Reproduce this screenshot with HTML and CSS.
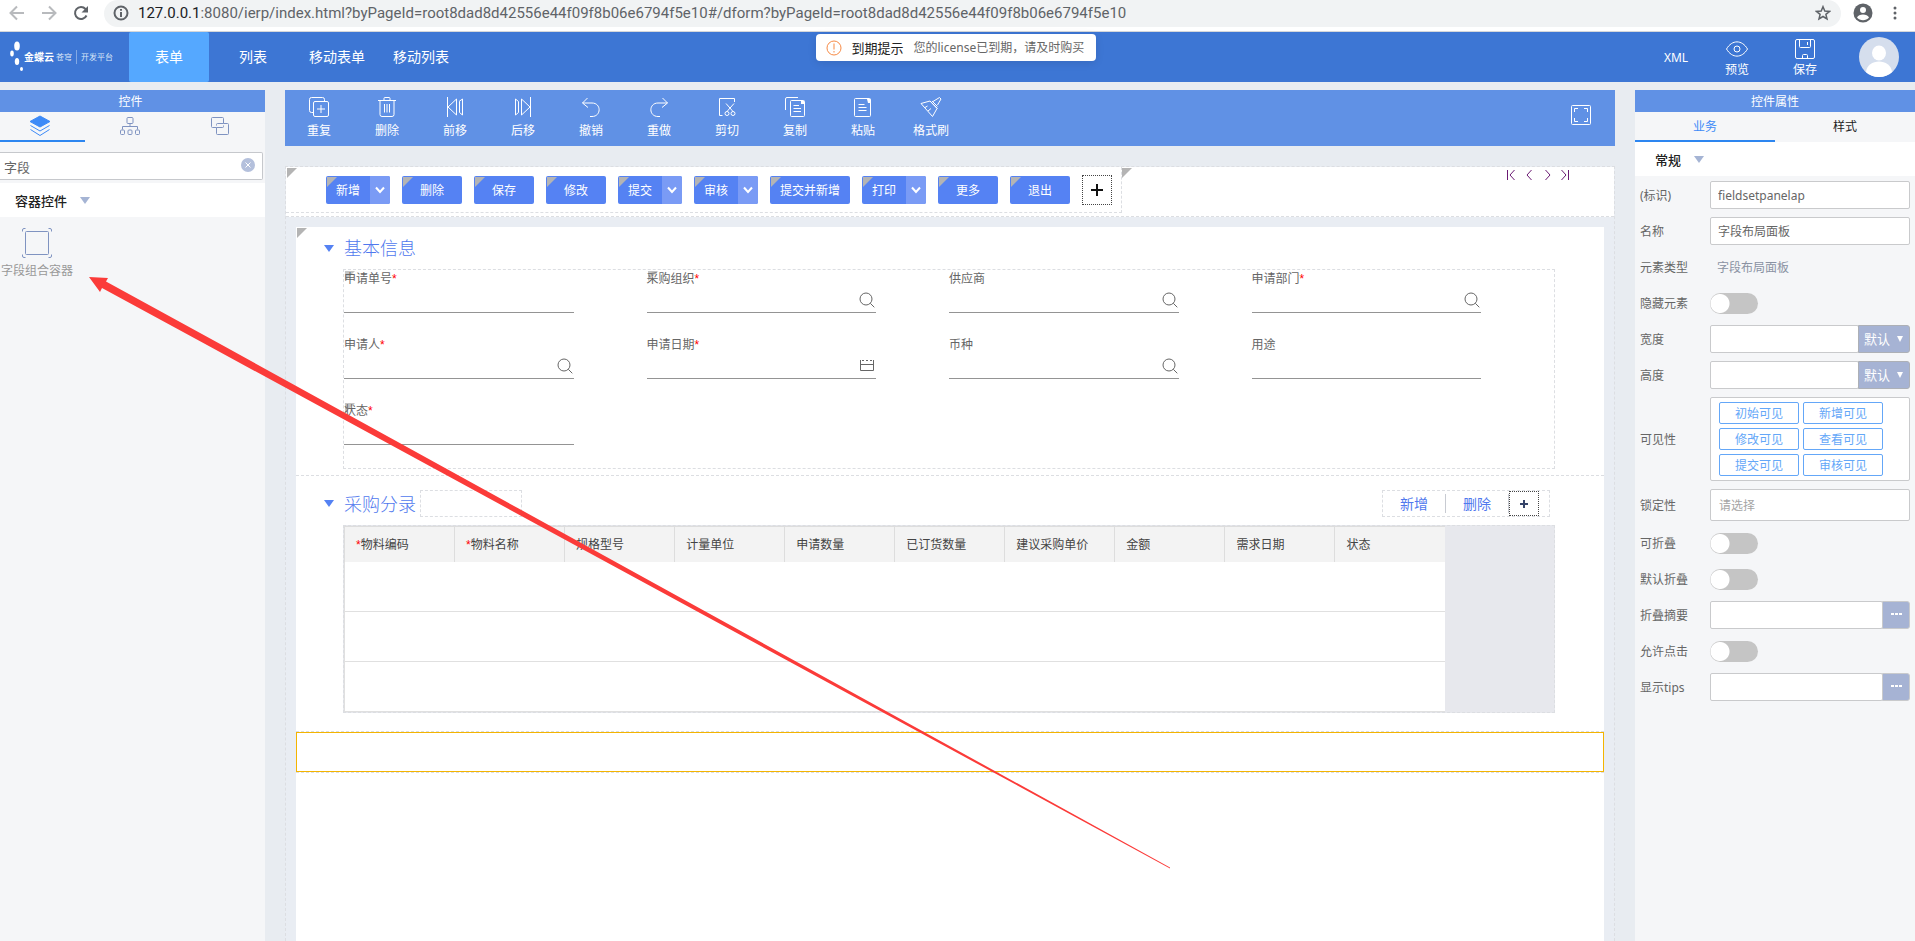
FILE: index.html
```html
<!DOCTYPE html>
<html lang="zh-CN">
<head>
<meta charset="utf-8">
<title>金蝶云苍穹 开发平台</title>
<link rel="stylesheet" href="styles.css">
</head>
<body>
<svg width="0" height="0" class="defs" aria-hidden="true">
  <symbol id="search" viewBox="0 0 16 16"><circle cx="7" cy="7" r="6"/><path d="M11.3 11.3L15.3 15.3"/></symbol>
  <symbol id="chev" viewBox="0 0 10 8"><path d="M1 1.5L5 6L9 1.5"/></symbol>
</svg>

<div class="browser">
  <button class="nav off" aria-label="后退"><svg width="16" height="16" viewBox="0 0 16 16"><path d="M15 8H2M8 1.500L1.500 8L8 14.500"/></svg></button>
  <button class="nav off" aria-label="前进"><svg width="16" height="16" viewBox="0 0 16 16"><path d="M1 8H14M8 1.500L14.500 8L8 14.500"/></svg></button>
  <button class="nav" aria-label="刷新"><svg width="16" height="16" viewBox="0 0 16 16"><path d="M13.500 10.500A6 6 0 1 1 12.500 4L14 5.500"/><path class="solid" d="M15 1V7.500H8.500Z"/></svg></button>
  <div class="address">
    <svg width="16" height="16" viewBox="0 0 16 16"><circle cx="8" cy="8" r="6.500"/><path d="M8 7V12M8 4V5.800"/></svg>
    <span class="url"><b>127.0.0.1</b>:8080/ierp/index.html?byPageId=root8dad8d42556e44f09f8b06e6794f5e10#/dform?byPageId=root8dad8d42556e44f09f8b06e6794f5e10</span>
    <svg width="16" height="16" viewBox="0 0 16 16"><path class="star" d="M8 1.700L9.800 6.100L14.500 6.400L10.900 9.400L12 14L8 11.500L4 14L5.100 9.400L1.500 6.400L6.200 6.100Z"/></svg>
  </div>
  <button class="nav user" aria-label="用户"><svg width="20" height="20" viewBox="0 0 20 20"><circle class="fill" cx="10" cy="10" r="9.500"/><circle class="hole" cx="10" cy="7" r="3"/><path class="hole" d="M4 14.500C5.500 10.500 14.500 10.500 16 14.500C13 18 7 18 4 14.500Z"/></svg></button>
  <button class="nav dots" aria-label="菜单"><svg width="6" height="16" viewBox="0 0 6 16"><g class="fill"><circle cx="3" cy="3" r="1.500"/><circle cx="3" cy="8" r="1.500"/><circle cx="3" cy="13" r="1.500"/></g></svg></button>
</div>

<header class="top">
  <div class="logo">
    <svg width="14" height="32" viewBox="0 0 14 32"><ellipse cx="7" cy="5" rx="2.800" ry="4.500"/><ellipse cx="2" cy="12.500" rx="1.800" ry="3"/><ellipse cx="7" cy="20.500" rx="2.200" ry="3.500"/><ellipse cx="11.500" cy="28" rx="1.500" ry="2"/></svg>
    <b>金蝶云</b><span>苍穹</span><i></i><span>开发平台</span>
  </div>
  <nav class="tabs">
    <a href="#form" class="on">表单</a><a href="#list">列表</a><a href="#mform">移动表单</a><a href="#mlist">移动列表</a>
  </nav>
  <div class="notice" role="alert">
    <svg width="16" height="16" viewBox="0 0 16 16"><circle cx="8" cy="8" r="7"/><path d="M8 3.500V9.500M8 11V12.500"/></svg>
    <strong>到期提示</strong><span>您的license已到期，请及时购买</span>
  </div>
  <div class="acts">
    <button class="xml">XML</button>
    <button><svg width="24" height="24" viewBox="0 0 24 24"><path d="M1.500 12C7 2.500 17 2.500 22.500 12C17 21.500 7 21.500 1.500 12Z"/><circle cx="12" cy="12" r="3"/></svg>预览</button>
    <button><svg width="24" height="24" viewBox="0 0 24 24"><rect x="2.500" y="2.500" width="19" height="19" rx="1.500"/><path d="M6.500 2.500V9.500Q6.500 10.500 7.500 10.500H16.500Q17.500 10.500 17.500 9.500V2.500M14.500 5V8M9.500 21.500V18.500Q9.500 17.500 10.500 17.500H13.500Q14.500 17.500 14.500 18.500V21.500"/></svg>保存</button>
    <svg class="avatar" width="40" height="40" viewBox="0 0 40 40"><circle cx="20" cy="20" r="20"/><g><ellipse cx="20" cy="16" rx="7" ry="7.500"/><path d="M7 35.200C8 21 32 21 33 35.200A20 20 0 0 1 7 35.200Z"/></g></svg>
  </div>
</header>

<main class="work">
  <aside class="panel left">
    <h2>控件</h2>
    <div class="ptabs three">
      <button class="on" aria-label="控件"><svg width="22" height="22" viewBox="0 0 22 22"><path class="full" d="M11 1L21 6.500L11 12L1 6.500Z"/><path d="M1.500 10.500L11 16L20.500 10.500M1.500 14.500L11 20.500L20.500 14.500"/></svg></button>
      <button aria-label="结构"><svg width="22" height="22" viewBox="0 0 22 22"><rect x="8" y="2.500" width="6" height="6" rx="1"/><path d="M11 8.500V11.500M3.500 14.500V11.500H18.500V14.500"/><rect x="1.500" y="15" width="4" height="4.500" rx="1"/><rect x="9" y="15" width="4" height="4.500" rx="1"/><rect x="16.500" y="15" width="4" height="4.500" rx="1"/></svg></button>
      <button aria-label="复制"><svg width="22" height="22" viewBox="0 0 22 22"><path d="M7.500 12.500H3.500Q2.500 12.500 2.500 11.500V3.500Q2.500 2.500 3.500 2.500H13.500Q14.500 2.500 14.500 3.500V8.500H8.500Q7.500 8.500 7.500 9.500V10.500M14.500 8.500H18.500Q19.500 8.500 19.500 9.500V18.500Q19.500 19.500 18.500 19.500H8.500Q7.500 19.500 7.500 18.500V12.500H13.500Q14.500 12.500 14.500 11.500V10.500"/></svg></button>
    </div>
    <div class="find">
      <input type="text" value="字段" aria-label="搜索控件">
      <button aria-label="清除"><svg width="14" height="14" viewBox="0 0 14 14"><circle cx="7" cy="7" r="7"/><path d="M4.500 4.500L9.500 9.500M9.500 4.500L4.500 9.500"/></svg></button>
    </div>
    <h3>容器控件<i class="tri"></i></h3>
    <a class="widget" href="#fieldgroup"><svg width="32" height="32" viewBox="0 0 32 32"><rect x="4.500" y="4.500" width="23" height="23" rx="1"/><path d="M1.500 4.500V3Q1.500 1.500 3 1.500H4.500M27.500 1.500H29Q30.500 1.500 30.500 3V4.500M30.500 27.500V29Q30.500 30.500 29 30.500H27.500M4.500 30.500H3Q1.500 30.500 1.500 29V27.500"/></svg><span>字段组合容器</span></a>
  </aside>

  <section class="center">
    <div class="tools">
      <button><svg viewBox="0 0 22 22"><path d="M5.500 16.500H3.500Q1.500 16.500 1.500 14.500V3.500Q1.500 1.500 3.500 1.500H14.500Q16.500 1.500 16.500 3.500V5"/><rect x="5.500" y="5.500" width="15" height="15" rx="1.500"/><path d="M13 9V17M9 13H17"/></svg>重复</button>
      <button><svg viewBox="0 0 22 22"><path d="M2 4.500H20M8 4V2.500Q8 1.500 9 1.500H13Q14 1.500 14 2.500V4M4 4.500V18.500Q4 20.500 6 20.500H16Q18 20.500 18 18.500V4.500M8.500 8V16.500M11 8V16.500M13.500 8V16.500"/></svg>删除</button>
      <button><svg viewBox="0 0 22 22"><path d="M3.500 1V21M12.500 3L4 11L12.500 19ZM15 5.500L18.500 3V19L15.500 16.500M15.500 5.500V16.500"/></svg>前移</button>
      <button><svg viewBox="0 0 22 22"><path d="M18.500 1V21M9.500 3L18 11L9.500 19ZM6.500 16.500L3.500 19V3L6.500 5.500V16.500"/></svg>后移</button>
      <button><svg viewBox="0 0 22 22"><path d="M7.500 2L2.500 7L8 11.500M2.500 7H12C21.500 7 21.500 20.500 12 20.500H10"/></svg>撤销</button>
      <button><svg viewBox="0 0 22 22"><path d="M14.500 2L19.500 7L14 11.500M19.500 7H10C0.500 7 0.500 20.500 10 20.500H12"/></svg>重做</button>
      <button><svg viewBox="0 0 22 22"><path d="M6.500 19.500H3.500V2.500H18.500V6M10 7.500L17 15.500M18 7.500L11 15.500"/><circle cx="11" cy="17.500" r="2"/><circle cx="17" cy="17.500" r="2"/></svg>剪切</button>
      <button><svg viewBox="0 0 22 22"><path d="M1.500 14V3Q1.500 1.500 3 1.500H14"/><rect x="6.500" y="4.500" width="14" height="16" rx="1"/><path d="M9.500 9.500H15M9.500 12.500H17M9.500 15.500H17"/><path class="white" d="M17 5H20V8H17Z"/></svg>复制</button>
      <button><svg viewBox="0 0 22 22"><rect x="2.500" y="2.500" width="16" height="18" rx="1"/><path d="M6.500 8.500H12.500M6.500 11.500H14.500M6.500 14.500H14.500"/><path class="white" d="M15 3H18.500V7H16Z"/></svg>粘贴</button>
      <button><svg viewBox="0 0 22 22"><path d="M10 5L1 7.500L12.500 20.500L17 12.500ZM10 5L17.500 12.500M12 5L17.500 10.500M13 5.500L19.500 1.500L21 3L17.500 9M5 11.500L7.500 10M8 15L11 12.500"/></svg>格式刷</button>
      <button class="full-btn" aria-label="全屏"><svg viewBox="0 0 22 22"><rect x="1.500" y="1.500" width="19" height="19" rx="1"/><path d="M4.500 8V4.500H8M14 4.500H17.500V8M17.500 14V17.500H14M8 17.500H4.500V14"/></svg></button>
    </div>

    <div class="canvas">
      <div class="bar">
        <div class="btns mark">
          <span class="split mark"><button>新增</button><button aria-label="更多"><svg><use href="#chev"/></svg></button></span>
          <button class="btn mark">删除</button>
          <button class="btn mark">保存</button>
          <button class="btn mark">修改</button>
          <span class="split mark"><button>提交</button><button aria-label="更多"><svg><use href="#chev"/></svg></button></span>
          <span class="split mark"><button>审核</button><button aria-label="更多"><svg><use href="#chev"/></svg></button></span>
          <button class="btn mark">提交并新增</button>
          <span class="split mark"><button>打印</button><button aria-label="更多"><svg><use href="#chev"/></svg></button></span>
          <button class="btn mark">更多</button>
          <button class="btn mark">退出</button>
          <button class="plus" aria-label="添加"><svg width="14" height="14" viewBox="0 0 14 14"><path d="M7 1V13M1 7H13"/></svg></button>
        </div>
        <div class="pager mark">
          <button aria-label="首条"><svg viewBox="0 0 10 12"><path d="M1.500 1V11M8.500 1L4 6L8.500 11"/></svg></button>
          <button aria-label="上一条"><svg viewBox="0 0 10 12"><path d="M7.500 1L3 6L7.500 11"/></svg></button>
          <button aria-label="下一条"><svg viewBox="0 0 10 12"><path d="M3.500 1L8 6L3.500 11"/></svg></button>
          <button aria-label="末条"><svg viewBox="0 0 10 12"><path d="M1.500 1L6 6L1.500 11M8.500 1V11"/></svg></button>
        </div>
      </div>

      <div class="sheet">
        <section class="block mark">
          <div class="head"><i class="tri"></i><h1>基本信息</h1></div>
          <div class="fields">
            <label class="mark"><span>申请单号<em>*</em></span><input type="text"></label>
            <label class="mark"><span>采购组织<em>*</em></span><input type="text"><svg><use href="#search"/></svg></label>
            <label><span>供应商</span><input type="text"><svg><use href="#search"/></svg></label>
            <label><span>申请部门<em>*</em></span><input type="text"><svg><use href="#search"/></svg></label>
            <label><span>申请人<em>*</em></span><input type="text"><svg><use href="#search"/></svg></label>
            <label><span>申请日期<em>*</em></span><input type="text"><svg viewBox="0 0 16 16"><path d="M1.500 2V12.500H14.500V2M1.500 6.500H14.500M3 2.500H5M7 2.500H9M11 2.500H13"/></svg></label>
            <label><span>币种</span><input type="text"><svg><use href="#search"/></svg></label>
            <label><span>用途</span><input type="text"></label>
            <label class="mark"><span>状态<em>*</em></span><input type="text"></label>
          </div>
        </section>

        <section class="block entry">
          <div class="head">
            <i class="tri"></i><h1>采购分录</h1><div class="slot"></div>
            <div class="links"><button>新增</button><button>删除</button><button class="plus" aria-label="添加"><svg width="10" height="10" viewBox="0 0 10 10"><path d="M5 1V9M1 5H9"/></svg></button></div>
          </div>
          <div class="gridbox">
            <table>
              <thead><tr><th><em>*</em>物料编码</th><th><em>*</em>物料名称</th><th>规格型号</th><th>计量单位</th><th>申请数量</th><th>已订货数量</th><th>建议采购单价</th><th>金额</th><th>需求日期</th><th>状态</th></tr></thead>
              <tbody><tr><td colspan="10"></td></tr><tr><td colspan="10"></td></tr><tr><td colspan="10"></td></tr></tbody>
            </table>
          </div>
        </section>
        <div class="picked"><div></div></div>
      </div>
    </div>
  </section>

  <aside class="panel right">
    <h2>控件属性</h2>
    <div class="ptabs"><button class="on">业务</button><button>样式</button></div>
    <h3>常规<i class="tri"></i></h3>
    <div class="props">
      <div class="row"><label for="pid">(标识)</label><input id="pid" type="text" value="fieldsetpanelap"></div>
      <div class="row"><label for="pname">名称</label><input id="pname" type="text" value="字段布局面板"></div>
      <div class="row"><span class="lab">元素类型</span><span class="value">字段布局面板</span></div>
      <div class="row"><label for="phide">隐藏元素</label><input id="phide" type="checkbox"></div>
      <div class="row"><label for="pw">宽度</label><input id="pw" type="text"><span class="unit"><select aria-label="宽度单位"><option>默认</option></select></span></div>
      <div class="row"><label for="ph">高度</label><input id="ph" type="text"><span class="unit"><select aria-label="高度单位"><option>默认</option></select></span></div>
      <div class="row"><span class="lab">可见性</span><div class="chips"><button>初始可见</button><button>新增可见</button><button>修改可见</button><button>查看可见</button><button>提交可见</button><button>审核可见</button></div></div>
      <div class="row"><label for="plock">锁定性</label><input id="plock" class="tall" type="text" placeholder="请选择"></div>
      <div class="row"><label for="pfold">可折叠</label><input id="pfold" type="checkbox"></div>
      <div class="row"><label for="pdef">默认折叠</label><input id="pdef" type="checkbox"></div>
      <div class="row"><label for="psum">折叠摘要</label><input id="psum" type="text"><button class="more" aria-label="更多"><i></i><i></i><i></i></button></div>
      <div class="row"><label for="pclick">允许点击</label><input id="pclick" type="checkbox"></div>
      <div class="row"><label for="ptips">显示tips</label><input id="ptips" type="text"><button class="more" aria-label="更多"><i></i><i></i><i></i></button></div>
    </div>
  </aside>
</main>

<svg class="arrow" width="1180" height="880" viewBox="0 0 1180 880" aria-hidden="true"><path d="M89 277L108 278L106 281.500L222 345L1170 867.500V868.500L207 345L102 288L100 292Z"/></svg>
</body>
</html>
```

FILE: styles.css
```css
* { box-sizing: border-box; }
body {
  margin: 0;
  min-height: 100vh;
  display: flex;
  flex-direction: column;
  position: relative;
  overflow-x: hidden;
  background: #e8ecf1;
  color: #666;
  font: 12px/18px "Noto Sans", "Noto Sans CJK SC", sans-serif;
}
button, input, select { font: inherit; color: inherit; margin: 0; padding: 0; border: 0; background: none; border-radius: 0; outline: 0; }
button { display: flex; align-items: center; justify-content: center; white-space: nowrap; }
svg { fill: none; stroke: currentColor; flex: none; display: block; }
em { font-style: normal; font-family: "Liberation Sans", sans-serif; color: #f00; }
h1, h2, h3 { margin: 0; font-weight: 400; }
a { color: inherit; text-decoration: none; }
.defs { position: absolute; }

/* browser bar */
.browser { height: 32px; flex: none; display: flex; align-items: flex-start; background: #fff; border-bottom: 1px solid #d5d7da; color: #5f6368; padding: 0 10px 0 8px; }
.nav { width: 32px; height: 26px; padding-right: 14px; }
.nav svg { stroke-width: 2; }
.off { color: #b8babd; }
.nav .solid, .nav .fill { fill: currentColor; stroke: none; }
.nav .hole { fill: #fff; stroke: none; }
.nav.user { width: 44px; padding: 0; }
.nav.dots { width: 20px; padding: 0; }
.address { flex: 1; height: 27px; display: flex; align-items: center; gap: 9px; background: #f1f3f4; border-radius: 14px; padding: 0 10px 1px 9px; min-width: 0; }
.address svg { stroke-width: 2; }
.address .star { stroke-width: 1.5; }
.url { flex: 1; font: 15px/24px Roboto, "Noto Sans", sans-serif; overflow: hidden; white-space: nowrap; }
.url b { font-weight: 400; color: #202124; }

/* header */
.top { height: 50px; flex: none; display: flex; background: #3d76d4; color: #fff; position: relative; }
.logo { width: 129px; display: flex; align-items: center; padding-left: 10px; font-size: 8px; color: #dce7f8; white-space: nowrap; }
.logo svg { fill: #fff; stroke: none; }
.logo b { font-size: 10px; color: #fff; margin-right: 2px; }
.logo i { width: 1px; height: 14px; background: #84a9e4; margin: 0 4px; }
.tabs { display: flex; font-size: 14px; }
.tabs a { width: 88px; line-height: 50px; text-align: center; white-space: nowrap; }
.tabs a:nth-child(odd) { width: 80px; }
.tabs a.on { background: #55a8ff; border-radius: 2px; }
.notice { position: absolute; top: 2px; left: 50%; width: 280px; margin-left: -142px; height: 27px; display: flex; align-items: center; padding-left: 10px; background: #fff; border-radius: 4px; box-shadow: 0 2px 8px rgba(0,0,0,.1); color: #666; white-space: nowrap; }
.notice svg { color: #f78a45; }
.notice strong { font-weight: 400; font-size: 13px; color: #222; margin: 0 10px; }
.acts { margin-left: auto; display: flex; align-items: center; padding-right: 16px; }
.acts button { width: 68px; height: 50px; padding-top: 2px; flex-direction: column; }
.acts .xml { width: 54px; }
.avatar { fill: #d5deed; stroke: none; margin-left: 20px; }
.avatar g { fill: #fff; }

/* panels */
.work { flex: 1; display: grid; grid-template-columns: 265px minmax(0, 1fr) 280px; gap: 20px; padding-top: 8px; }
.panel { background: #f5f6f8; }
.panel h2 { height: 22px; background: #6091e5; color: #fff; font-size: 12px; line-height: 24px; text-align: center; }
.left h2 { padding-right: 4px; }
.ptabs { display: flex; height: 30px; color: #222; }
.ptabs button { flex: 1; padding-top: 2px; border-bottom: 2px solid transparent; }
.ptabs .on { border-color: #2d86f0; color: #3d8af7; }
.ptabs.three button { color: #7f93c1; flex: none; width: 90px; padding: 0; }
.ptabs.three .on { width: 85px; padding-right: 5px; color: #3d8af7; }
.full { fill: currentColor; }
.panel h3 { display: flex; align-items: center; background: #fff; height: 34px; padding: 1px 0 0 15px; font-size: 13px; font-weight: 500; color: #222; }
.tri { width: 0; height: 0; border: 5px solid transparent; border-top: 7px solid #a5b4d4; border-bottom: 0; }
.panel h3 .tri { margin-left: 13px; }
.find { position: relative; margin: 10px 2px 3px 0; }
.find input { width: 100%; height: 28px; display: block; background: #fff; border: 1px solid #c6c8cc; border-left: 0; border-radius: 0 2px 2px 0; padding-left: 4px; font-size: 13px; }
.find button { position: absolute; right: 8px; top: 6px; }
.find svg { fill: #b4c0dc; stroke: none; }
.find path { stroke: #fff; }
.widget { width: 74px; display: flex; flex-direction: column; align-items: center; padding-top: 10px; color: #999; white-space: nowrap; }
.widget svg { color: #7f93c1; }
.widget span { margin-top: 3px; }
.right h3 { padding-left: 20px; margin-bottom: 1px; }

/* toolbar */
.center { display: flex; flex-direction: column; }
.tools { height: 56px; display: flex; background: #6091e5; color: #fff; }
.tools button { width: 68px; flex-direction: column; gap: 4px; }
.tools svg { width: 22px; height: 22px; }
.tools .white { fill: #fff; stroke: none; }
.tools .full-btn { margin-left: auto; padding-bottom: 6px; }

/* design canvas */
.canvas { flex: 1; margin-top: 20px; display: flex; flex-direction: column; border: 1px dashed #dcdee2; border-bottom: 0; background: #e9edf3; }
.mark { position: relative; }
.mark::before { content: ""; position: absolute; left: 1px; top: 1px; border-top: 10px solid #b4b4b4; border-right: 10px solid transparent; pointer-events: none; }
.bar { display: flex; background: #fff; border-bottom: 1px dashed #dcdee2; }
.btns { display: flex; align-items: flex-start; gap: 12px; padding: 8px 9px 0 40px; height: 46px; margin-bottom: 3px; border-bottom: 1px dashed #dcdee2; border-right: 1px dashed #dcdee2; }
.btn, .split { height: 28px; min-width: 60px; margin-top: 1px; border-radius: 2px; background: #5582f3; color: #fff; overflow: hidden; padding: 2px 10px 0; }
.split { display: flex; padding: 0; }
.split button { width: 44px; padding-top: 2px; }
.split button + button { width: 20px; padding: 0; background: #7a9bf5; }
.split svg { width: 10px; height: 8px; stroke-width: 2; }
.plus { width: 30px; height: 30px; border: 1px dotted #444; color: #111; }
.plus svg { stroke-width: 2; }
.pager { flex: 1; display: flex; justify-content: flex-end; gap: 8px; padding: 2px 44px 0 0; height: 16px; color: #6b1a73; }
.pager button { width: 10px; height: 12px; }
.pager svg { width: 10px; height: 12px; }
.pager::before { left: 0; }
.sheet { flex: 1; margin: 10px 10px 0; background: #fff; }
.block { border-bottom: 1px dashed #dcdee2; padding-bottom: 6px; }
.head { display: flex; align-items: center; height: 42px; padding-left: 28px; color: #5078ee; }
.head .tri { border-top-color: #5582f3; margin-right: 10px; }
.head h1 { font-size: 18px; line-height: 28px; font-weight: 300; }
.fields { margin: 0 49px 0 47px; border: 1px dashed #dcdee2; display: grid; grid-template-columns: repeat(4, minmax(0, 1fr)); }
.fields label { width: 76%; height: 66px; position: relative; }
.fields .mark::before { border-top-color: #c4c4c4; left: 1px; }
.fields span { position: relative; display: block; line-height: 18px; }
.fields input { width: 100%; height: 25px; display: block; border-bottom: 1px solid #949494; }
.fields svg { position: absolute; right: 1px; top: 22px; width: 16px; height: 16px; }
.entry { padding: 14px 0 18px; }
.entry .head { height: 27px; padding-right: 54px; margin-bottom: 8px; }
.slot { width: 102px; height: 27px; margin-left: 4px; border: 1px dashed #dcdee2; }
.links { display: flex; height: 27px; margin-left: auto; padding-right: 10px; border: 1px dashed #dcdee2; font-size: 14px; align-items: center; }
.links button { width: 63px; height: 19px; border-right: 1px solid #c8cbd2; }
.links .plus { width: 30px; height: 25px; border: 1px dotted #444; color: #354469; }
.gridbox { margin: 0 49px 0 47px; border: 1px dashed #dcdee2; background: #e7e8ed; }
.gridbox table { border-collapse: collapse; table-layout: fixed; width: 1101px; background: #fff; }
.gridbox th { height: 35px; width: 110px; text-align: left; font-weight: 400; color: #444; background: #f3f3f3; padding: 2px 0 0 11px; border: 1px solid #ddd; border-bottom: 0; white-space: nowrap; }
.gridbox th:last-child { border-right: 0; }
.gridbox td { height: 50px; padding: 0; border: 1px solid #e0e0e0; border-top: 0; border-right: 0; }
.picked { border: 1px dashed #dcdee2; border-width: 1px 0; margin-top: -1px; }
.picked div { height: 40px; border: 1px solid #f4b400; }

/* property list */
.props { padding: 0 5px; }
.row { display: flex; align-items: center; padding: 4px 0; min-height: 36px; }
.row > label, .lab { width: 70px; flex: none; padding-top: 2px; }
.row input[type=text] { flex: 1; min-width: 0; height: 28px; background: #fff; border: 1px solid #c9cacc; border-radius: 2px; padding-left: 7px; }
.row input.tall { height: 32px; padding-left: 8px; }
.row input::placeholder { color: #a5a5a5; }
.value { padding: 2px 0 0 7px; color: #8a92a3; }
.row input[type=checkbox] { appearance: none; width: 48px; height: 21px; border-radius: 11px; background: radial-gradient(circle at 10px 50%, #fff 9px, #c5c5c5 10px); }
.unit { position: relative; color: #fff; }
.unit select { appearance: none; display: block; width: 52px; height: 28px; margin-left: -1px; padding-left: 5px; font-size: 13px; background: #a6b3d4; border: 1px solid #adb0b6; border-radius: 0 3px 3px 0; }
.unit::after { content: ""; position: absolute; right: 7px; top: 11px; border: 3px solid transparent; border-top: 6px solid #fff; border-bottom: 0; pointer-events: none; }
.chips { flex: 1; display: grid; grid-template-columns: 80px 80px; gap: 4px; padding: 4px 8px; background: #fff; border: 1px solid #c9cacc; border-radius: 2px; color: #64a7f8; }
.chips button { height: 22px; padding-top: 2px; border: 1px solid #64a7f8; border-radius: 2px; }
.more { width: 28px; height: 28px; margin-left: -1px; gap: 1px; padding-bottom: 3px; background: #a6b3d4; border: 1px solid #c9cacc; border-radius: 0 3px 3px 0; }
.more i { width: 3px; height: 2px; background: #fff; }

/* pointer drawn over the page */
.arrow { position: absolute; left: 0; top: 0; pointer-events: none; fill: #fb3b39; stroke: none; }
```
